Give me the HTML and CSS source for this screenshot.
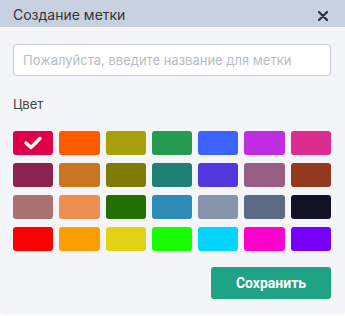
FILE: index.html
```html
<!DOCTYPE html>
<html lang="ru">
<head>
    <meta charset="UTF-8">
    <title>Создание метки</title>
    <link rel="stylesheet" href="styles.css">
</head>
<body>
    <div class="modal">
        <div class="modal-header">
            <span class="modal-title">Создание метки</span>
            <button class="close" aria-label="Закрыть">
                <svg width="10" height="10" viewBox="0 0 10 10"><path d="M1 1L9 9M9 1L1 9" stroke="#2b2f36" stroke-width="2.2" stroke-linecap="round"/></svg>
            </button>
        </div>
        <div class="modal-body">
            <input type="text" class="name-input" placeholder="Пожалуйста, введите название для метки">
            <div class="label">Цвет</div>
            <div class="colors">
                <div class="swatch selected" style="background:#e0004a">
                    <svg width="20" height="14" viewBox="0 0 20 14"><path d="M3 7L8 11.5L17 2.5" fill="none" stroke="#fff" stroke-width="3.4" stroke-linecap="round" stroke-linejoin="round"/></svg>
                </div>
                <div class="swatch" style="background:#ff5c00"></div>
                <div class="swatch" style="background:#a89e0b"></div>
                <div class="swatch" style="background:#269c52"></div>
                <div class="swatch" style="background:#3d63ff"></div>
                <div class="swatch" style="background:#c02ee3"></div>
                <div class="swatch" style="background:#dc2d8f"></div>

                <div class="swatch" style="background:#8b2252"></div>
                <div class="swatch" style="background:#c97521"></div>
                <div class="swatch" style="background:#807b06"></div>
                <div class="swatch" style="background:#1f8076"></div>
                <div class="swatch" style="background:#4f38dd"></div>
                <div class="swatch" style="background:#985e84"></div>
                <div class="swatch" style="background:#923a20"></div>

                <div class="swatch" style="background:#aa716f"></div>
                <div class="swatch" style="background:#ed8f50"></div>
                <div class="swatch" style="background:#237002"></div>
                <div class="swatch" style="background:#2d8bb5"></div>
                <div class="swatch" style="background:#8794ab"></div>
                <div class="swatch" style="background:#5c6a86"></div>
                <div class="swatch" style="background:#131126"></div>

                <div class="swatch" style="background:#ff0000"></div>
                <div class="swatch" style="background:#ff9e00"></div>
                <div class="swatch" style="background:#e3d114"></div>
                <div class="swatch" style="background:#1aff00"></div>
                <div class="swatch" style="background:#00d4ff"></div>
                <div class="swatch" style="background:#ff00cc"></div>
                <div class="swatch" style="background:#7700ff"></div>
            </div>
            <div class="actions">
                <button class="save">Сохранить</button>
            </div>
        </div>
    </div>
</body>
</html>
```

FILE: styles.css
```css
body {
    margin: 0;
    padding: 0;
    background-color: #ffffff;
    font-family: Inter, "Noto Sans", sans-serif;
    color: #333;
}
.modal {
    width: 345px;
    height: 315px;
    background-color: #f4f5f8;
    border-radius: 0 0 4px 4px;
    overflow: hidden;
}
.modal-header {
    height: 27px;
    background-color: #c8d1e0;
    display: flex;
    align-items: center;
    justify-content: space-between;
    padding: 0 13px;
}
.modal-title {
    font-size: 14px;
    color: #333;
    padding-top: 1px;
}
.close {
    background: none;
    border: none;
    padding: 0;
    margin-top: 5px;
    margin-right: 4px;
    display: flex;
    cursor: pointer;
}
.modal-body {
    padding: 17px 14px 0 13px;
}
.name-input {
    display: block;
    box-sizing: border-box;
    width: 318px;
    height: 32px;
    padding: 0 9px;
    border: 1px solid #c9cdd5;
    border-radius: 3px;
    background: #fff;
    font-family: inherit;
    font-size: 13px;
    color: #333;
    outline: none;
}
.name-input::placeholder {
    color: #b9bcc3;
}
.label {
    margin-top: 20px;
    font-size: 13px;
    color: #444;
    line-height: 16px;
}
.colors {
    margin-top: 19px;
    width: 318px;
    display: grid;
    grid-template-columns: repeat(7, 1fr);
    gap: 8px 6px;
}
.swatch {
    height: 24px;
    border-radius: 3px;
    display: flex;
    align-items: center;
    justify-content: center;
    cursor: pointer;
}
.actions {
    width: 318px;
    display: flex;
    justify-content: flex-end;
    margin-top: 16px;
}
.save {
    width: 120px;
    height: 32px;
    border: none;
    border-radius: 3px;
    background-color: #1fa385;
    color: #fff;
    font-family: Roboto, Inter, sans-serif;
    font-weight: bold;
    font-size: 14px;
    cursor: pointer;
}
```
